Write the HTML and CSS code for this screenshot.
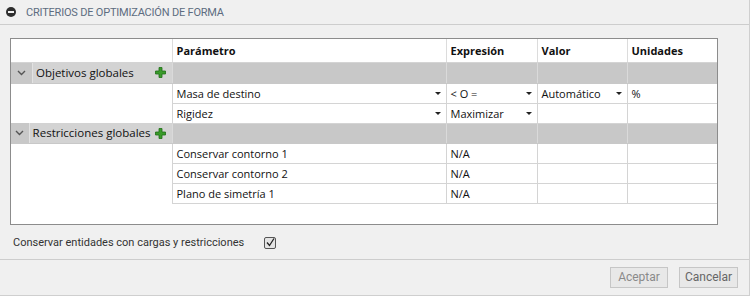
FILE: index.html
```html
<!DOCTYPE html>
<html lang="es">
<head>
    <meta charset="UTF-8">
    <title>Criterios de optimización de forma</title>
    <link rel="stylesheet" href="styles.css">
</head>
<body>
    <div class="panel">
        <div class="panel-header">
            <span class="collapse-icon"></span>
            <span class="panel-title">CRITERIOS DE OPTIMIZACIÓN DE FORMA</span>
        </div>

        <div class="panel-body">
            <div class="grid-frame">
                <table class="grid">
                    <colgroup>
                        <col class="c-tree">
                        <col class="c-param">
                        <col class="c-expr">
                        <col class="c-val">
                        <col class="c-unit">
                    </colgroup>
                    <thead>
                        <tr>
                            <th class="tree-head"></th>
                            <th>Parámetro</th>
                            <th>Expresión</th>
                            <th>Valor</th>
                            <th>Unidades</th>
                        </tr>
                    </thead>
                    <tbody>
                        <!-- Objetivos globales -->
                        <tr class="group">
                            <td class="group-cell">
                                <div class="group-label">
                                    <span class="chevron"><svg width="9" height="6" viewBox="0 0 9 6"><path d="M1 1 L4.5 4.5 L8 1" fill="none" stroke="#555" stroke-width="1.4"/></svg></span>
                                    <span class="group-name">Objetivos globales</span>
                                    <span class="add-icon"><svg width="11" height="11" viewBox="0 0 11 11"><path d="M4 0.5h3v3.5h3.5v3h-3.5v3.5h-3v-3.5h-3.5v-3h3.5z" fill="#3a9a2a" stroke="#1f6e17" stroke-width="0.8"/></svg></span>
                                </div>
                            </td>
                            <td></td><td></td><td></td><td></td>
                        </tr>
                        <tr class="item">
                            <td class="tree"></td>
                            <td><div class="drop">Masa de destino<span class="caret"></span></div></td>
                            <td><div class="drop">&lt; O =<span class="caret"></span></div></td>
                            <td><div class="drop">Automático<span class="caret"></span></div></td>
                            <td>%</td>
                        </tr>
                        <tr class="item">
                            <td class="tree"></td>
                            <td><div class="drop">Rigidez<span class="caret"></span></div></td>
                            <td><div class="drop">Maximizar<span class="caret"></span></div></td>
                            <td></td>
                            <td></td>
                        </tr>

                        <!-- Restricciones globales -->
                        <tr class="group">
                            <td class="group-cell">
                                <div class="group-label">
                                    <span class="chevron"><svg width="9" height="6" viewBox="0 0 9 6"><path d="M1 1 L4.5 4.5 L8 1" fill="none" stroke="#555" stroke-width="1.4"/></svg></span>
                                    <span class="group-name">Restricciones globales</span>
                                    <span class="add-icon"><svg width="11" height="11" viewBox="0 0 11 11"><path d="M4 0.5h3v3.5h3.5v3h-3.5v3.5h-3v-3.5h-3.5v-3h3.5z" fill="#3a9a2a" stroke="#1f6e17" stroke-width="0.8"/></svg></span>
                                </div>
                            </td>
                            <td></td><td></td><td></td><td></td>
                        </tr>
                        <tr class="item">
                            <td class="tree"></td>
                            <td>Conservar contorno 1</td>
                            <td>N/A</td>
                            <td></td>
                            <td></td>
                        </tr>
                        <tr class="item">
                            <td class="tree"></td>
                            <td>Conservar contorno 2</td>
                            <td>N/A</td>
                            <td></td>
                            <td></td>
                        </tr>
                        <tr class="item">
                            <td class="tree"></td>
                            <td>Plano de simetría 1</td>
                            <td>N/A</td>
                            <td></td>
                            <td></td>
                        </tr>
                    </tbody>
                </table>
            </div>

            <label class="keep-row">
                <span>Conservar entidades con cargas y restricciones</span>
                <span class="checkbox">
                    <svg width="9" height="9" viewBox="0 0 9 9"><path d="M1 4.5 L3.5 7.5 L8 0.5" fill="none" stroke="#222" stroke-width="1.3"/></svg>
                </span>
            </label>
        </div>

        <div class="panel-footer">
            <button class="btn btn-disabled">Aceptar</button>
            <button class="btn">Cancelar</button>
        </div>
    </div>
</body>
</html>
```

FILE: styles.css
```css
* {
    margin: 0;
    padding: 0;
    box-sizing: border-box;
}

body {
    background-color: #f0f0f0;
    font-family: Roboto, 'Liberation Sans', Arial, sans-serif;
    width: 750px;
    height: 296px;
}

.panel {
    width: 750px;
    height: 296px;
    border-right: 1px solid #cfcfcf;
    border-bottom: 1px solid #cfcfcf;
    display: flex;
    flex-direction: column;
}

.panel-header {
    height: 25px;
    border-bottom: 1px solid #cdcdcd;
    display: flex;
    align-items: center;
    padding-left: 6px;
}

.collapse-icon {
    width: 10px;
    height: 10px;
    border-radius: 50%;
    background-color: #2e2e2e;
    position: relative;
    margin-right: 10px;
}

.collapse-icon::after {
    content: '';
    position: absolute;
    left: 2px;
    top: 4px;
    width: 6px;
    height: 2px;
    background-color: #f0f0f0;
}

.panel-title {
    font-size: 11px;
    letter-spacing: -0.2px;
    color: #5d6c80;
}

.panel-body {
    padding: 13px 32px 0 10px;
    height: 234px;
}

.grid-frame {
    width: 708px;
    height: 187px;
    border: 1px solid #8c8c8c;
    background-color: #ffffff;
}

.grid {
    width: 706px;
    border-collapse: collapse;
    table-layout: fixed;
    font-family: 'Open Sans', 'Noto Sans', sans-serif;
    font-size: 11px;
    color: #111;
}

.c-tree { width: 161px; }
.c-param { width: 274px; }
.c-expr { width: 91px; }
.c-val { width: 90px; }
.c-unit { width: 90px; }

.grid th {
    height: 23px;
    text-align: left;
    font-weight: bold;
    padding-left: 4px;
    border-left: 1px solid #dcdcdc;
    border-bottom: 1px solid #d4d4d4;
}

.grid th.tree-head {
    border-left: none;
}

.grid td {
    height: 20px;
    padding: 0 0 0 4px;
    border-left: 1px solid #d4d4d4;
    border-bottom: 1px solid #d4d4d4;
    white-space: nowrap;
}

.grid td.tree {
    border-left: none;
    border-bottom: none;
}

.group td {
    background-color: #c8c8c8;
    border-color: #dadada;
    border-bottom-color: #c8c8c8;
}

.group td.group-cell {
    padding: 0;
    border-left: none;
}

.group-label {
    display: flex;
    align-items: center;
    height: 20px;
}

.chevron {
    width: 21px;
    display: flex;
    justify-content: center;
}

.group-name {
    flex: 1;
    height: 20px;
    line-height: 20px;
    padding-left: 3px;
    background-color: #d3d3d3;
    border-left: 1px solid #e2e2e2;
    font-size: 11.5px;
}

.add-icon {
    display: flex;
    align-items: center;
    height: 20px;
    padding: 0 6px 0 4px;
    background-color: #d3d3d3;
}

.drop {
    display: flex;
    align-items: center;
    justify-content: space-between;
    padding-right: 5px;
}

.caret {
    width: 0;
    height: 0;
    border-left: 3px solid transparent;
    border-right: 3px solid transparent;
    border-top: 3px solid #222;
}

.keep-row {
    display: flex;
    align-items: center;
    gap: 20px;
    margin-top: 11px;
    padding-left: 3px;
    font-size: 11px;
    color: #333;
}

.checkbox {
    width: 12px;
    height: 12px;
    border: 1px solid #555;
    border-radius: 2px;
    background-color: #e4e4e4;
    display: flex;
    align-items: center;
    justify-content: center;
}

.panel-footer {
    flex: 1;
    border-top: 1px solid #cdcdcd;
    display: flex;
    justify-content: flex-end;
    align-items: center;
    gap: 11px;
    padding-right: 11px;
    padding-bottom: 1px;
}

.btn {
    font-family: Roboto, 'Liberation Sans', Arial, sans-serif;
    font-size: 12px;
    width: 59px;
    height: 21px;
    background-color: #e8e8e8;
    border: 1px solid #c6c6c6;
    color: #666;
}

.btn-disabled {
    width: 58px;
    color: #8a8a8a;
}
```
